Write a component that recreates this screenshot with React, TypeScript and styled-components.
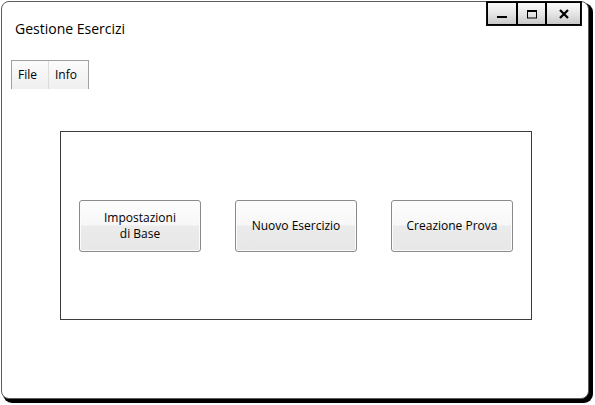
import React from "react";
import styled, { createGlobalStyle } from "styled-components";

const Global = createGlobalStyle`
  html, body { margin: 0; padding: 0; background: #fff; }
  body { font-family: "Open Sans", "Noto Sans", sans-serif; color: #000; }
`;

const Page = styled.div`
  width: 595px;
  height: 405px;
  padding: 1px 0 0 1px;
  box-sizing: border-box;
`;

const Window = styled.div`
  width: 588px;
  height: 398px;
  box-sizing: border-box;
  border: 1px solid #5c5c5c;
  border-radius: 8px;
  box-shadow: 3px 3px 0 1px #000;
  background: #fff;
  display: flex;
  flex-direction: column;
`;

const TitleBar = styled.div`
  display: flex;
  justify-content: space-between;
  align-items: flex-start;
  height: 58px;
`;

const Title = styled.div`
  font-size: 14px;
  line-height: 19px;
  margin: 17px 0 0 13px;
`;

const Controls = styled.div`
  display: flex;
  margin: -1px 6px 0 0;
  border: 1px solid #111;
`;

const CtrlButton = styled.div<{ $w: number }>`
  width: ${(p) => p.$w}px;
  height: 23px;
  box-sizing: border-box;
  border: 1px solid #000;
  background: linear-gradient(#fbfbfb, #e6e6e6 50%, #c9c9c9);
  display: flex;
  align-items: center;
  justify-content: center;
`;

const TabStrip = styled.div`
  display: flex;
  margin-left: 9px;
  width: 78px;
  height: 29px;
  box-sizing: border-box;
  border: 1px solid #a0a0a0;
  border-bottom: none;
  background: linear-gradient(#fbfbfb, #efefef);
`;

const Tab = styled.div<{ $w: number; $divider?: boolean }>`
  width: ${(p) => p.$w}px;
  box-sizing: border-box;
  font-size: 12px;
  line-height: 28px;
  padding-left: 6px;
  border-right: ${(p) => (p.$divider ? "1px solid #dcdcdc" : "none")};
`;

const Panel = styled.div`
  margin: 42px 0 0 58px;
  width: 472px;
  height: 189px;
  box-sizing: border-box;
  border: 1px solid #3c3c3c;
  display: flex;
  align-items: center;
  gap: 34px;
  padding-left: 18px;
`;

const ActionButton = styled.div`
  width: 122px;
  height: 52px;
  box-sizing: border-box;
  border: 1px solid #8a8a8a;
  border-radius: 3px;
  background: linear-gradient(#fdfdfd 0%, #f7f7f7 48%, #ebebeb 50%, #e7e7e7 100%);
  display: flex;
  align-items: center;
  justify-content: center;
  text-align: center;
  font-size: 12px;
  line-height: 16px;
  box-shadow: inset 0 0 0 1px #fcfcfc;
`;

export default function App() {
  return (
    <Page>
      <Global />
      <Window>
        <TitleBar>
          <Title>Gestione Esercizi</Title>
          <Controls>
            <CtrlButton $w={30}>
              <svg width="12" height="12" viewBox="0 0 12 12">
                <rect x="1" y="8" width="10" height="2" fill="#000" />
              </svg>
            </CtrlButton>
            <CtrlButton $w={29}>
              <svg width="12" height="12" viewBox="0 0 12 12">
                <rect x="1.5" y="2.5" width="9" height="7.5" fill="none" stroke="#000" strokeWidth="1" />
                <rect x="1" y="2" width="10" height="2" fill="#000" />
              </svg>
            </CtrlButton>
            <CtrlButton $w={35}>
              <svg width="12" height="12" viewBox="0 0 12 12">
                <path d="M2 2 L10 10 M10 2 L2 10" stroke="#000" strokeWidth="2.2" />
              </svg>
            </CtrlButton>
          </Controls>
        </TitleBar>
        <TabStrip>
          <Tab $w={37} $divider>File</Tab>
          <Tab $w={39}>Info</Tab>
        </TabStrip>
        <Panel>
          <ActionButton>
            Impostazioni
            <br />
            di Base
          </ActionButton>
          <ActionButton>Nuovo Esercizio</ActionButton>
          <ActionButton>Creazione Prova</ActionButton>
        </Panel>
      </Window>
    </Page>
  );
}
